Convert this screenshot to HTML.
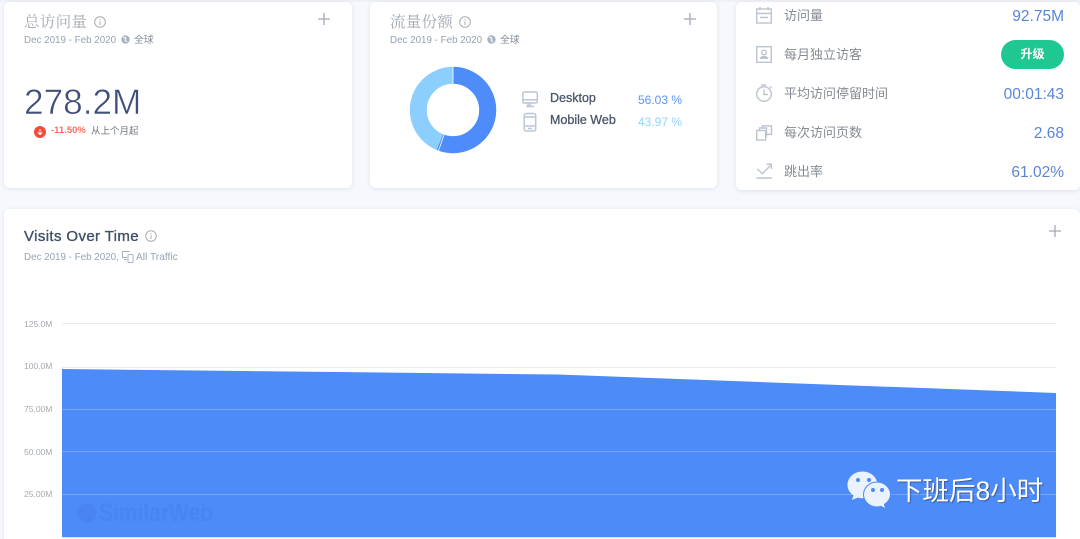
<!DOCTYPE html>
<html><head><meta charset="utf-8">
<style>
html,body{margin:0;padding:0;width:1080px;height:539px;overflow:hidden;background:#f5f8fd}
body{position:relative;font-family:"Liberation Sans","Noto Sans CJK SC",sans-serif}
.a{position:absolute;white-space:nowrap}
.card{position:absolute;background:#fff;border-radius:6px;box-shadow:0 1px 5px rgba(42,62,82,.10)}
.t{font-family:"Liberation Serif","Noto Serif CJK SC",serif;font-size:15.5px;color:#a3a9b1;line-height:20px;letter-spacing:.3px}
.s{font-size:9.8px;color:#95a3b5;line-height:14px}
.l{font-size:13px;color:#858b93;line-height:18px}
.v{font-size:15.5px;color:#5a84d6;line-height:20px;text-align:right;right:16px}
.ax{font-size:8.5px;color:#a5a9ad;line-height:10px;left:24px}
.g{position:absolute;left:62px;width:994px;height:1px}
svg{position:absolute;overflow:visible}
</style></head>
<body>
<div class="a" style="left:0;top:0;width:1080px;height:2px;background:#eef1f5"></div>

<div class="card" style="left:4px;top:2px;width:348px;height:186px"></div>
<div class="a t" style="left:24px;top:13px">总访问量</div>
<svg style="left:94px;top:16px" width="12" height="12" fill="none" stroke="#a9adb3"><circle cx="6" cy="6" r="5.3"/><path d="M6 5.4V9M6 3v1.2"/></svg>
<svg style="left:318px;top:13px" width="12" height="12" stroke="#a5abb3" stroke-width="1.3"><path d="M6 0v12M0 6h12"/></svg>
<div class="a s" style="left:24px;top:34px">Dec 2019 - Feb 2020</div>
<svg style="left:121px;top:35px" width="9" height="9"><circle cx="4.5" cy="4.5" r="4.2" fill="#a8b4c3"/><path d="M2 2l3 1-1 2 2 2" stroke="#fff" fill="none"/></svg>
<div class="a s" style="left:134px;top:34px;color:#7f8a97">全球</div>
<div class="a" style="left:24px;top:83px;font-size:35.2px;line-height:40px;color:#3f4f7a;-webkit-text-stroke:.55px #fff">278.2M</div>
<svg style="left:34px;top:126px" width="12" height="12"><circle cx="6" cy="6" r="6" fill="#f44a3c"/><path d="M6 3v5.5M3.8 6.5L6 8.6l2.2-2.1" stroke="#fff" fill="none"/></svg>
<div class="a" style="left:51px;top:124px;font-size:9.5px;line-height:14px;font-weight:bold;color:#fb6d5e">-11.50%</div>
<div class="a" style="left:91px;top:125px;font-size:9.5px;line-height:14px;color:#71767d">从上个月起</div>

<div class="card" style="left:370px;top:2px;width:347px;height:186px"></div>
<div class="a t" style="left:390px;top:13px">流量份额</div>
<svg style="left:459px;top:16px" width="12" height="12" fill="none" stroke="#a9adb3"><circle cx="6" cy="6" r="5.3"/><path d="M6 5.4V9M6 3v1.2"/></svg>
<svg style="left:684px;top:13px" width="12" height="12" stroke="#a5abb3" stroke-width="1.3"><path d="M6 0v12M0 6h12"/></svg>
<div class="a s" style="left:390px;top:34px">Dec 2019 - Feb 2020</div>
<svg style="left:487px;top:35px" width="9" height="9"><circle cx="4.5" cy="4.5" r="4.2" fill="#a8b4c3"/><path d="M2 2l3 1-1 2 2 2" stroke="#fff" fill="none"/></svg>
<div class="a s" style="left:500px;top:34px;color:#7f8a97">全球</div>
<svg style="left:400px;top:57px" width="106" height="106">
<circle cx="53" cy="53" r="34.7" fill="none" stroke="#8ccfff" stroke-width="17"/>
<circle cx="53" cy="53" r="34.7" fill="none" stroke="#4d8cfa" stroke-width="17" stroke-dasharray="122.2 218" transform="rotate(-90 53 53)"/>
<path d="M53 9.5V27M38.4 94l5.7-16.2" stroke="#fff" stroke-width=".8"/>
</svg>
<svg style="left:522px;top:91px" width="17" height="42" fill="none" stroke="#bcc6d6" stroke-width="1.5"><rect x=".8" y="1" width="14.5" height="11" rx="1.5"/><path d="M.8 8.8h14.5M6 12.5v3M8 12.5v3M4 15.5h8"/><rect x="2.2" y="22.5" width="11.5" height="17.5" rx="2"/><path d="M2.2 26h11.5M2.2 35h11.5M6 37.5h4"/></svg>
<div class="a" style="left:550px;top:91px;font-size:12.5px;line-height:15px;color:#4c5767;-webkit-text-stroke:.3px #4c5767">Desktop</div>
<div class="a" style="left:550px;top:113px;font-size:12.5px;line-height:15px;color:#4c5767;-webkit-text-stroke:.3px #4c5767">Mobile Web</div>
<div class="a" style="left:638px;top:92px;font-size:12px;line-height:16px;color:#5b95fb">56.03 %</div>
<div class="a" style="left:638px;top:114px;font-size:12px;line-height:16px;color:#94d3fe">43.97 %</div>

<div class="card" style="left:736px;top:2px;width:344px;height:188px"></div>
<svg style="left:756px;top:7px" width="17" height="17" fill="none" stroke="#bcc4d1" stroke-width="1.4"><rect x=".7" y="2" width="14.6" height="14"/><path d="M.7 6.5h14.6M4 0v3M12 0v3M4 10.5h8"/></svg>
<svg style="left:756px;top:46px" width="17" height="17" fill="none" stroke="#bcc4d1" stroke-width="1.4"><rect x=".7" y=".7" width="14.6" height="15.6"/><circle cx="8" cy="6.5" r="2.3"/><path d="M4 13h8v-1.5l-2-1.5H6l-2 1.5z" fill="#bcc4d1" stroke="none"/></svg>
<svg style="left:755px;top:84px" width="18" height="18" fill="none" stroke="#bcc4d1" stroke-width="1.4"><circle cx="9" cy="10" r="7.3"/><path d="M9 5.5V10.5h4M6 1h5M15 2.5l1.500 1.500"/></svg>
<svg style="left:756px;top:125px" width="17" height="16" fill="none" stroke="#bcc4d1" stroke-width="1.4"><rect x=".7" y="5.5" width="9" height="9.5"/><path d="M3.5 5V3h7v8H10M6.5 3V.8h9v8.5h-5"/></svg>
<svg style="left:756px;top:163px" width="17" height="16" fill="none" stroke="#bcc4d1" stroke-width="1.4"><path d="M1 6l5.5 4.5L15 2M10.5 1.2H15.4V6M.5 15h15.500"/></svg>
<div class="a l" style="left:784px;top:7px">访问量</div>
<div class="a l" style="left:784px;top:46px">每月独立访客</div>
<div class="a l" style="left:784px;top:85px">平均访问停留时间</div>
<div class="a l" style="left:784px;top:124px">每次访问页数</div>
<div class="a l" style="left:784px;top:163px">跳出率</div>
<div class="a v" style="top:7px">92.75M</div>
<div class="a" style="left:1001px;top:40px;width:63px;height:29px;border-radius:15px;background:#1fc892;color:#fff;font-size:12px;font-weight:bold;line-height:29px;text-align:center">升级</div>
<div class="a v" style="top:85px">00:01:43</div>
<div class="a v" style="top:124px">2.68</div>
<div class="a v" style="top:163px">61.02%</div>

<div class="card" style="left:4px;top:209px;width:1076px;height:340px"></div>
<div class="a" style="left:24px;top:228px;font-size:15px;line-height:18px;color:#3f5066;letter-spacing:.38px;-webkit-text-stroke:.35px #3f5066">Visits Over Time</div>
<svg style="left:145px;top:230px" width="12" height="12" fill="none" stroke="#a9adb3"><circle cx="6" cy="6" r="5.3"/><path d="M6 5.4V9M6 3v1.2"/></svg>
<svg style="left:1049px;top:225px" width="12" height="12" stroke="#a5abb3" stroke-width="1.3"><path d="M6 0v12M0 6h12"/></svg>
<div class="a s" style="left:24px;top:251px">Dec 2019 - Feb 2020,</div>
<svg style="left:122px;top:251px" width="12" height="12" fill="none" stroke="#a8b4c3"><path d="M8 .5H.5v6H5M2 8.5h3"/><rect x="6" y="3.5" width="5" height="8" rx="1"/></svg>
<div class="a s" style="left:136px;top:251px;font-size:10.2px">All Traffic</div>

<div class="g" style="top:323px;background:#ebebeb"></div>
<div class="g" style="top:367px;background:#ebebeb"></div>
<svg style="left:0;top:0" width="1080" height="539"><path d="M62 369L558 374.5L1056 393V537H62Z" fill="#4d8bf9"/><path d="M62 537.5H1056" stroke="#d5e2f7"/></svg>
<div class="g" style="top:409px;background:#76a5fa"></div>
<div class="g" style="top:451px;background:#76a5fa"></div>
<div class="g" style="top:494px;background:#76a5fa"></div>
<div class="a ax" style="top:319px">125.0M</div>
<div class="a ax" style="top:361px">100.0M</div>
<div class="a ax" style="top:404px">75.00M</div>
<div class="a ax" style="top:447px">50.00M</div>
<div class="a ax" style="top:489px">25.00M</div>
<svg style="left:77px;top:503px" width="20" height="20"><circle cx="10" cy="10" r="9.5" fill="#4884f2"/></svg>
<div class="a" style="left:99px;top:500px;font-size:25px;line-height:26px;font-weight:bold;color:#4884f2;transform:scaleX(.84);transform-origin:0 0">SimilarWeb</div>

<svg style="left:847px;top:471px" width="44" height="38">
<path d="M15.5 .5C7 .5 .5 6.5 .5 14c0 4.500 2.500 8 6 10.500L5 29l6-2.500c1.500.5 3 .8 4.500.8 8.500 0 15-6 15-13.300S24 .5 15.500 .5Z" fill="#eaf2fe"/>
<circle cx="11" cy="9" r="2" fill="#4d8bf9"/><circle cx="22" cy="9" r="2" fill="#4d8bf9"/>
<path d="M30 11c-7.500 0-13.500 5.800-13.500 12.500S22.500 36 30 36c1.500 0 3-.2 4-.6l4.500 2.400-1-4.500c3.500-2.300 6-5.700 6-9.800C43.500 16.800 37.500 11 30 11Z" fill="#eaf2fe" stroke="#4d8bf9"/>
<circle cx="26" cy="19" r="2" fill="#4d8bf9"/><circle cx="35" cy="19" r="2" fill="#4d8bf9"/>
</svg>
<div class="a" style="left:896px;top:473px;font-size:26.5px;line-height:36px;color:#fff;text-shadow:1px 1px 1px rgba(40,50,80,.55)">下班后8小时</div>
</body></html>
